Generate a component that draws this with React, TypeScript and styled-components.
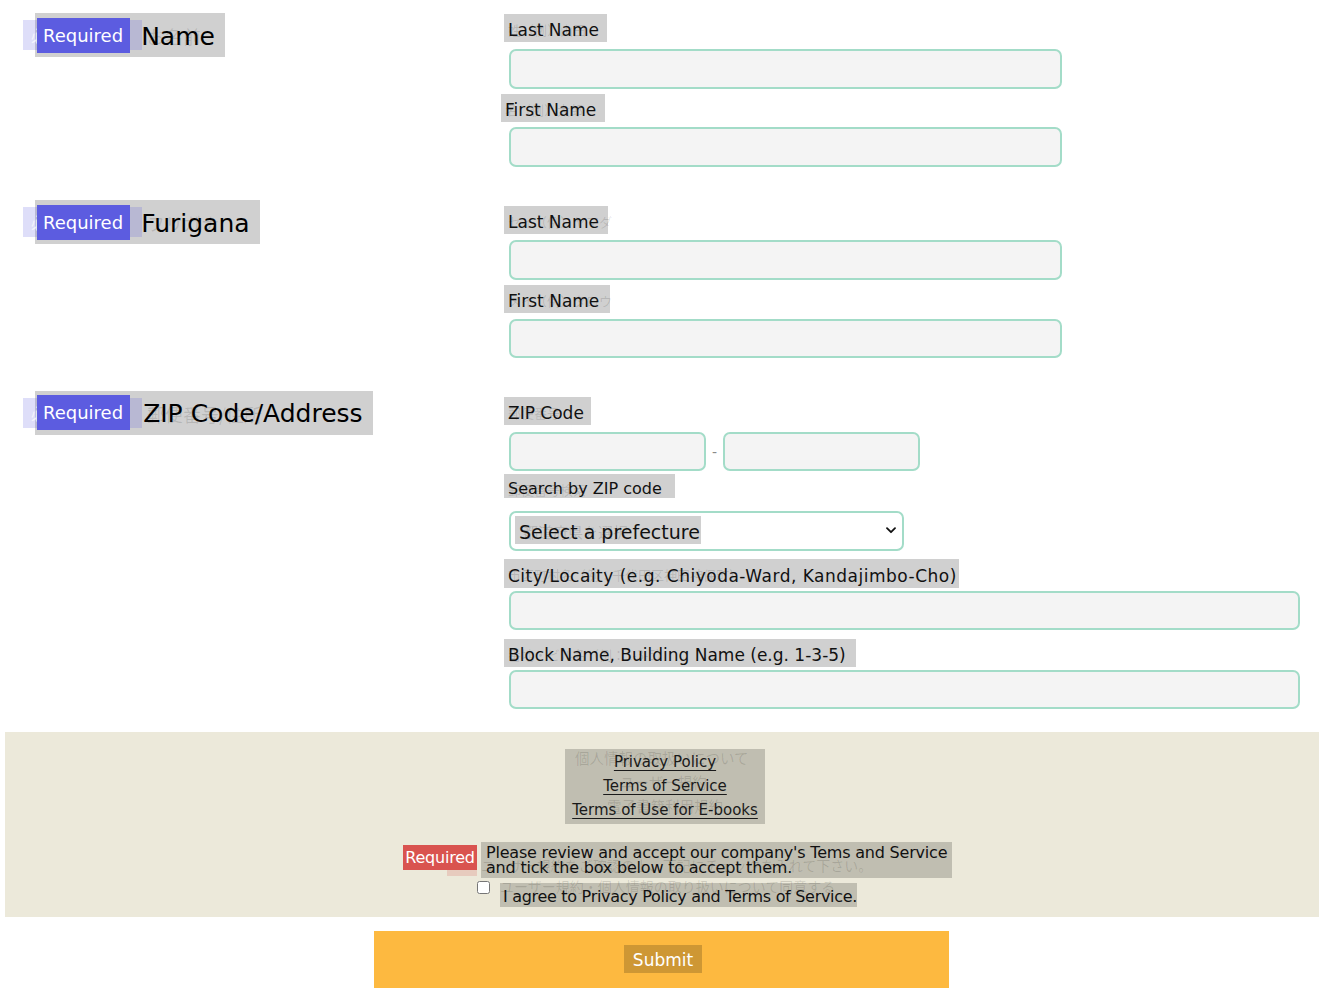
import React from "react";
import styled, { createGlobalStyle } from "styled-components";

const Global = createGlobalStyle`
  html, body { margin: 0; padding: 0; background: #fff; }
  body {
    font-family: "DejaVu Sans", "Noto Sans CJK JP", sans-serif;
    color: #111;
  }
  * { box-sizing: border-box; }
`;

const JP = `"Noto Sans CJK JP", sans-serif`;
const VEIL = "rgba(0,0,0,0.185)";

const Page = styled.main`
  width: 1326px;
  padding-top: 13px;
  padding-bottom: 11px;
`;

const Row = styled.section<{ $gap: number }>`
  display: grid;
  grid-template-columns: 504px 1fr;
  margin-top: ${(p) => p.$gap}px;
`;

const LeftCell = styled.div`
  padding-left: 35px;
  display: flex;
  align-items: flex-start;
`;

const SectionLabel = styled.div<{ $pt: number }>`
  position: relative;
  display: inline-flex;
  align-items: flex-start;
  gap: 11px;
  background: ${VEIL};
  padding: ${(p) => p.$pt}px 10px 0 2px;
  height: 44px;
  font-size: 25px;
  line-height: 35px;
  color: #000;
`;

const GhostBadge = styled.span`
  position: absolute;
  left: -12px;
  top: 7px;
  width: 119px;
  height: 30px;
  background: rgba(92, 92, 224, 0.2);
  color: rgba(255, 255, 255, 0.7);
  font-family: ${JP};
  font-size: 16px;
  line-height: 30px;
  padding-left: 8px;
`;

const GhostTitle = styled.span`
  position: absolute;
  left: 112px;
  top: 8px;
  font-family: ${JP};
  font-size: 18px;
  line-height: 30px;
  color: rgba(0, 0, 0, 0.12);
  white-space: nowrap;
`;

const Badge = styled.span`
  position: relative;
  display: inline-flex;
  align-items: center;
  height: 35px;
  padding: 0 7px 0 6px;
  background: #5c5ce0;
  color: #fff;
  font-size: 18px;
`;

const TitleText = styled.span<{ $ml?: number }>`
  position: relative;
  margin-left: ${(p) => p.$ml ?? 0}px;
  padding-top: 1px;
`;

const RightCol = styled.div`
  display: flex;
  flex-direction: column;
  align-items: flex-start;
`;

const Label = styled.span<{ $mt?: number; $h?: number; $fs?: number; $ml?: number; $pr?: number; $ls?: number }>`
  position: relative;
  display: inline-block;
  margin-top: ${(p) => p.$mt ?? 0}px;
  margin-left: ${(p) => p.$ml ?? 0}px;
  height: ${(p) => p.$h ?? 28}px;
  padding: 0 ${(p) => p.$pr ?? 8}px 0 4px;
  background: ${VEIL};
  font-size: ${(p) => p.$fs ?? 17}px;
  letter-spacing: ${(p) => p.$ls ?? 0}px;
  line-height: ${(p) => (p.$h ?? 28) + 5}px;
  color: #111;
  white-space: nowrap;
`;

const Ghost = styled.span<{ $top?: number; $left?: number; $fs?: number }>`
  position: absolute;
  left: ${(p) => p.$left ?? 4}px;
  top: ${(p) => p.$top ?? 4}px;
  font-family: ${JP};
  font-size: ${(p) => p.$fs ?? 13}px;
  letter-spacing: 0;
  line-height: 1.2;
  color: rgba(0, 0, 0, 0.13);
  white-space: nowrap;
  pointer-events: none;
`;

const Txt = styled.span`
  position: relative;
`;

const Input = styled.input<{ $w: number; $mt?: number; $h?: number }>`
  display: block;
  width: ${(p) => p.$w}px;
  height: ${(p) => p.$h ?? 40}px;
  margin: ${(p) => p.$mt ?? 0}px 0 0 5px;
  background: #f4f4f4;
  border: 2px solid #a3dcc8;
  border-radius: 7px;
  outline: none;
  padding: 0 10px;
  font-size: 16px;
`;

const ZipRow = styled.div<{ $mt: number }>`
  display: flex;
  align-items: center;
  margin: ${(p) => p.$mt}px 0 0 5px;
`;

const ZipInput = styled(Input)`
  margin: 0;
`;

const Dash = styled.span`
  width: 17px;
  text-align: center;
  color: #8a8a8a;
  font-size: 14px;
`;

const SelectWrap = styled.div<{ $mt: number }>`
  position: relative;
  margin: ${(p) => p.$mt}px 0 0 5px;
  width: 395px;
  height: 40px;
`;

const Select = styled.select`
  appearance: none;
  -webkit-appearance: none;
  width: 100%;
  height: 100%;
  border: 2px solid #a3dcc8;
  border-radius: 7px;
  background: #fff;
  font-family: ${JP};
  font-size: 15px;
  color: rgba(0, 0, 0, 0.15);
  padding-left: 12px;
  outline: none;
`;

const Chevron = styled.svg`
  position: absolute;
  right: 8px;
  top: 16px;
  width: 10px;
  height: 7px;
  pointer-events: none;
`;

const SelectVeil = styled.span`
  position: absolute;
  left: 6px;
  top: 5px;
  height: 28px;
  padding: 0 1px 0 4px;
  background: ${VEIL};
  font-size: 19px;
  line-height: 32px;
  color: #111;
  pointer-events: none;
  white-space: nowrap;
`;

const Consent = styled.section`
  margin: 23px 7px 0 5px;
  background: #ece9da;
  padding: 17px 0 10px;
  display: flex;
  flex-direction: column;
  align-items: center;
`;

const LinksBox = styled.div`
  position: relative;
  width: 200px;
  height: 75px;
  padding-top: 1px;
  background: ${VEIL};
  display: flex;
  flex-direction: column;
  align-items: center;
  margin-left: 6px;
`;

const PolicyLink = styled.a`
  position: relative;
  font-size: 15px;
  line-height: 24px;
  color: #1a1a1a;
  text-decoration: underline;
  text-underline-offset: 3px;
`;

const NoticeRow = styled.div`
  position: relative;
  display: flex;
  align-items: flex-start;
  margin-top: 18px;
  margin-left: 31px;
  gap: 4px;
`;

const RedBadge = styled.span`
  position: relative;
  margin-top: 3px;
  height: 25px;
  width: 74px;
  text-align: center;
  background: #d9534f;
  color: #fff;
  font-size: 16px;
  letter-spacing: -0.2px;
  line-height: 26px;
`;

const RedGhost = styled.span`
  position: absolute;
  left: 44px;
  top: 28px;
  width: 30px;
  height: 6px;
  background: rgba(217, 83, 79, 0.2);
`;

const NoticeBox = styled.div`
  position: relative;
  width: 471px;
  height: 36px;
  padding: 3px 0 0 5px;
  background: ${VEIL};
  font-size: 16px;
  letter-spacing: -0.2px;
  line-height: 15px;
  color: #111;
  white-space: nowrap;
`;

const AgreeRow = styled.label`
  display: flex;
  align-items: flex-start;
  margin-left: 10px;
`;

const Check = styled.input`
  width: 13px;
  height: 13px;
  margin: 3px 10px 0 0;
`;

const AgreeBox = styled.span`
  position: relative;
  margin-top: 5px;
  height: 24px;
  width: 357px;
  padding: 0 0 0 3px;
  background: ${VEIL};
  font-size: 16px;
  letter-spacing: -0.3px;
  line-height: 27px;
  color: #111;
  white-space: nowrap;
`;

const SubmitBar = styled.button`
  display: flex;
  align-items: center;
  justify-content: center;
  width: 575px;
  height: 57px;
  margin: 14px 0 0 374px;
  border: none;
  background: #fdb940;
  cursor: pointer;
  padding: 0 0 1px 3px;
`;

const SubmitVeil = styled.span`
  position: relative;
  width: 78px;
  height: 28px;
  background: ${VEIL};
  color: #fff;
  font-family: "DejaVu Sans", sans-serif;
  font-size: 17px;
  line-height: 30px;
  text-align: center;
`;

function FieldLabel(props: {
  en: string;
  jp: string;
  mt?: number;
  h?: number;
  fs?: number;
  ml?: number;
  pr?: number;
  ls?: number;
}) {
  return (
    <Label $mt={props.mt} $h={props.h} $fs={props.fs} $ml={props.ml} $pr={props.pr} $ls={props.ls}>
      <Ghost $top={8}>{props.jp}</Ghost>
      <Txt>{props.en}</Txt>
    </Label>
  );
}

function Heading(props: { en: string; jp: string; pt: number; ml?: number }) {
  return (
    <SectionLabel $pt={props.pt}>
      <GhostBadge>必須項目</GhostBadge>
      <GhostTitle>{props.jp}</GhostTitle>
      <Badge>Required</Badge>
      <TitleText $ml={props.ml}>{props.en}</TitleText>
    </SectionLabel>
  );
}

export default function App() {
  return (
    <Page>
      <Global />
      <Row $gap={0}>
        <LeftCell>
          <Heading en="Name" jp="お名前" pt={5} />
        </LeftCell>
        <RightCol>
          <FieldLabel en="Last Name" jp="姓（例）山田" mt={1} />
          <Input $w={553} $mt={7} />
          <FieldLabel en="First Name" jp="名（例）太郎" mt={5} ml={-3} pr={9} />
          <Input $w={553} $mt={5} />
        </RightCol>
      </Row>

      <Row $gap={33}>
        <LeftCell>
          <Heading en="Furigana" jp="フリガナ" pt={5} />
        </LeftCell>
        <RightCol>
          <FieldLabel en="Last Name" jp="セイ（例）ヤマダ" mt={6} pr={9} />
          <Input $w={553} $mt={6} />
          <FieldLabel en="First Name" jp="メイ（例）タロウ" mt={5} pr={11} />
          <Input $w={553} $mt={6} $h={39} />
        </RightCol>
      </Row>

      <Row $gap={33}>
        <LeftCell>
          <Heading en="ZIP Code/Address" jp="郵便番号/住所" pt={4} ml={2} />
        </LeftCell>
        <RightCol>
          <FieldLabel en="ZIP Code" jp="郵便番号" mt={6} pr={7} />
          <ZipRow $mt={7}>
            <ZipInput $w={197} $h={39} />
            <Dash>-</Dash>
            <ZipInput $w={197} $h={39} />
          </ZipRow>
          <FieldLabel en="Search by ZIP code" jp="郵便番号検索" mt={3} h={24} fs={16} pr={13} />
          <SelectWrap $mt={13}>
            <Select defaultValue="">
              <option value="">都道府県を選択</option>
            </Select>
            <Chevron viewBox="0 0 10 7">
              <path d="M1 1.2 L5 5.2 L9 1.2" fill="none" stroke="#111" strokeWidth="1.8" strokeLinecap="round" strokeLinejoin="round" />
            </Chevron>
            <SelectVeil>Select a prefecture</SelectVeil>
          </SelectWrap>
          <FieldLabel
            en="City/Locaity (e.g. Chiyoda-Ward, Kandajimbo-Cho)"
            jp="市区町村名（例：千代田区神田神保町）"
            mt={8}
            h={29}
            pr={2}
            ls={0.5}
          />
          <Input $w={791} $mt={3} $h={39} />
          <FieldLabel en="Block Name, Building Name (e.g. 1-3-5)" jp="番地・ビル名（例：1-3-5）" mt={9} pr={10} />
          <Input $w={791} $mt={3} $h={39} />
        </RightCol>
      </Row>

      <Consent>
        <LinksBox>
          <Ghost $top={0} $left={10} $fs={14.5}>個人情報の取扱いについて</Ghost>
          <Ghost $top={24} $left={55} $fs={14.5}>ユーザー規約</Ghost>
          <Ghost $top={48} $left={42} $fs={14.5}>電子書籍利用規約</Ghost>
          <PolicyLink href="#">Privacy Policy</PolicyLink>
          <PolicyLink href="#">Terms of Service</PolicyLink>
          <PolicyLink href="#">Terms of Use for E-books</PolicyLink>
        </LinksBox>
        <NoticeRow>
          <RedGhost />
          <RedBadge>Required</RedBadge>
          <NoticeBox>
            <Ghost $top={15} $left={0} $fs={14}>ユーザー規約をご確認の上、下記にチェックを入れて下さい。</Ghost>
            <Txt>
              Please review and accept our company's Tems and Service
              <br />
              and tick the box below to accept them.
            </Txt>
          </NoticeBox>
        </NoticeRow>
        <AgreeRow>
          <Check type="checkbox" />
          <AgreeBox>
            <Ghost $top={-5} $left={0} $fs={14}>ユーザー規約・個人情報の取り扱いについて同意する</Ghost>
            <Txt>I agree to Privacy Policy and Terms of Service.</Txt>
          </AgreeBox>
        </AgreeRow>
      </Consent>

      <SubmitBar type="button">
        <SubmitVeil>Submit</SubmitVeil>
      </SubmitBar>
    </Page>
  );
}
